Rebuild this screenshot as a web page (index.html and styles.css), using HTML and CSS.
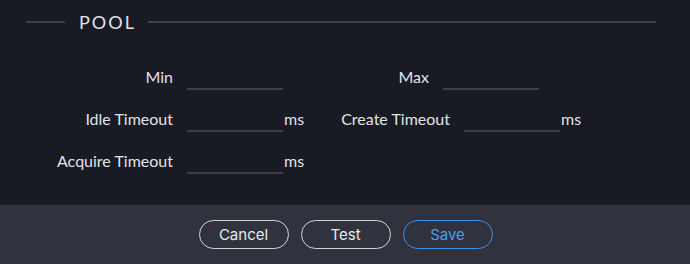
FILE: index.html
```html
<!DOCTYPE html>
<html lang="en">
<head>
    <meta charset="UTF-8">
    <title>Pool</title>
    <link rel="stylesheet" href="styles.css">
</head>
<body>
    <div class="panel">
        <div class="section-title">
            <span class="rule short"></span>
            <span class="title-text">POOL</span>
            <span class="rule long"></span>
        </div>

        <div class="fields">
            <div class="row">
                <label class="field">
                    <span class="label">Min</span>
                    <input type="text">
                </label>
                <label class="field">
                    <span class="label">Max</span>
                    <input type="text">
                </label>
            </div>
            <div class="row">
                <label class="field">
                    <span class="label">Idle Timeout</span>
                    <input type="text">
                    <span class="unit">ms</span>
                </label>
                <label class="field">
                    <span class="label">Create Timeout</span>
                    <input type="text">
                    <span class="unit">ms</span>
                </label>
            </div>
            <div class="row">
                <label class="field">
                    <span class="label">Acquire Timeout</span>
                    <input type="text">
                    <span class="unit">ms</span>
                </label>
            </div>
        </div>
    </div>

    <div class="footer">
        <button class="btn">Cancel</button>
        <button class="btn">Test</button>
        <button class="btn primary">Save</button>
    </div>
</body>
</html>
```
FILE: styles.css
```css
:root {
    --bg-main: #181a24;
    --bg-footer: #30323d;
    --text: #e2e2e8;
    --line: #3b3d49;
    --accent: #3f92e4;
}

* {
    margin: 0;
    padding: 0;
    box-sizing: border-box;
}

body {
    width: 690px;
    height: 264px;
    background: var(--bg-main);
    color: var(--text);
    font-family: Lato, "Noto Sans", sans-serif;
    overflow: hidden;
}

.panel {
    height: 205px;
    padding: 12px 34px 0 26px;
}

.section-title {
    display: flex;
    align-items: center;
    gap: 14px;
    height: 20px;
}

.rule {
    height: 2px;
    background: var(--line);
}

.rule.short {
    width: 39px;
}

.rule.long {
    flex: 1;
    margin-left: -2px;
}

.title-text {
    font-size: 18px;
    letter-spacing: 2px;
    line-height: 20px;
}

.fields {
    display: flex;
    flex-direction: column;
    gap: 14px;
    margin-top: 30px;
    padding-left: 21px;
}

.row {
    display: flex;
    gap: 20px;
    height: 28px;
}

.field {
    display: flex;
    align-items: center;
    font-size: 16px;
}

.label {
    width: 140px;
    padding-right: 14px;
    text-align: right;
    white-space: nowrap;
}

.field input {
    width: 96px;
    height: 28px;
    background: transparent;
    border: none;
    border-bottom: 2px solid var(--line);
    color: var(--text);
    font: inherit;
    outline: none;
}

.unit {
    width: 21px;
    padding-left: 1px;
}

.footer {
    height: 59px;
    background: var(--bg-footer);
    display: flex;
    align-items: center;
    justify-content: center;
    gap: 12px;
    padding-left: 1px;
}

.btn {
    width: 90px;
    height: 29px;
    border: 1.5px solid #d4d4da;
    border-radius: 15px;
    background: transparent;
    color: #e8e8ee;
    font-family: Inter, "Noto Sans", sans-serif;
    font-size: 15px;
    cursor: pointer;
}

.btn.primary {
    border-color: var(--accent);
    color: #4a9cec;
}
```
